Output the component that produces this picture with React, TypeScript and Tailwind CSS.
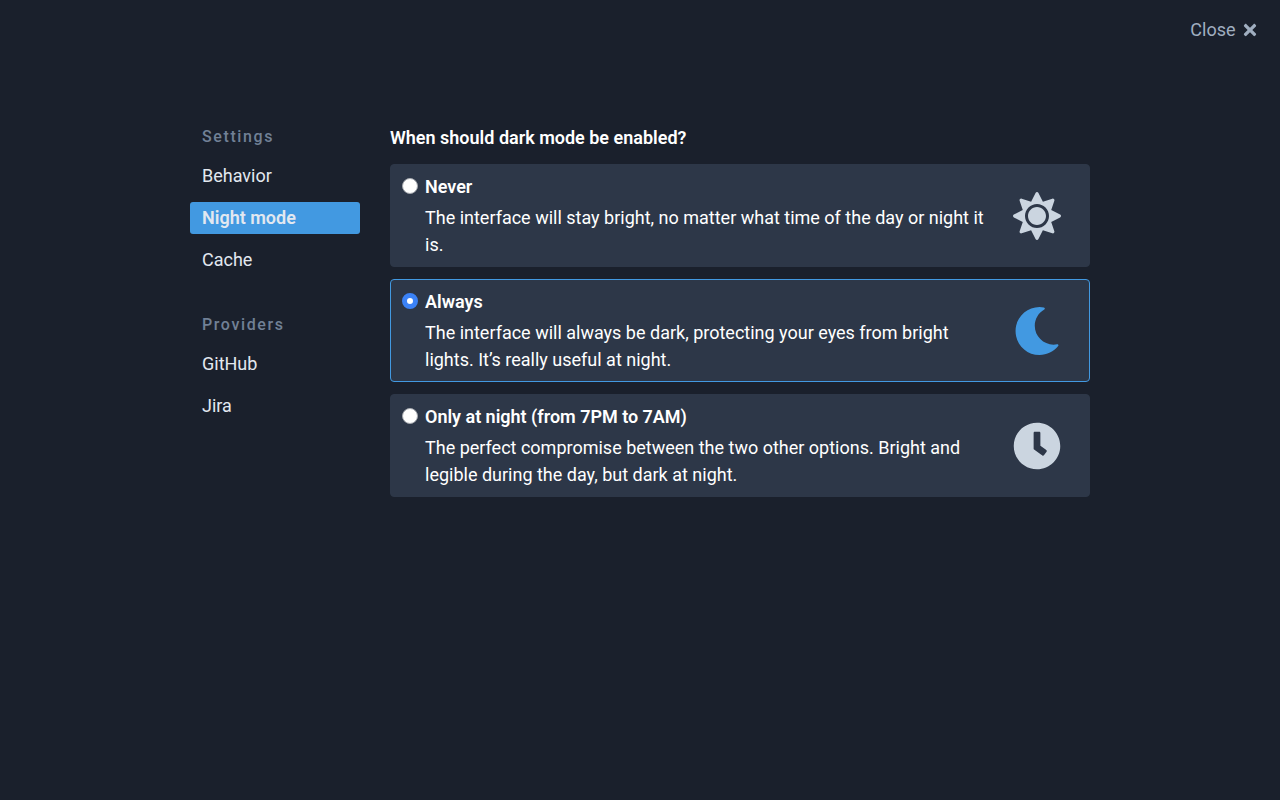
import { FaTimes, FaSun, FaMoon } from "react-icons/fa";

function Clock({ size, className }: { size: number; className?: string }) {
  return (
    <svg viewBox="0 0 512 512" width={size} height={size} fill="currentColor" className={className}>
      <path d="M256 8C119 8 8 119 8 256s111 248 248 248 248-111 248-248S393 8 256 8zm57.1 350.1L224.9 294c-3.1-2.3-4.9-5.9-4.9-9.7V116c0-6.6 5.4-12 12-12h48c6.6 0 12 5.4 12 12v137.7l63.5 46.2c5.4 3.9 6.5 11.4 2.6 16.8l-28.2 38.8c-3.9 5.3-11.4 6.5-16.8 2.6z" />
    </svg>
  );
}

const sections = [
  { title: "Settings", items: ["Behavior", "Night mode", "Cache"] },
  { title: "Providers", items: ["GitHub", "Jira"] },
];

const options = [
  { title: "Never", text: "The interface will stay bright, no matter what time of the day or night it is.", Icon: FaSun },
  { title: "Always", text: "The interface will always be dark, protecting your eyes from bright lights. It’s really useful at night.", Icon: FaMoon },
  { title: "Only at night (from 7PM to 7AM)", text: "The perfect compromise between the two other options. Bright and legible during the day, but dark at night.", Icon: Clock },
];

export default function App() {
  return (
    <div className="min-h-screen bg-[#1a202c] font-['Roboto',sans-serif] text-[18px] leading-[27px] text-white">
      <header className="flex h-[60px] items-center justify-end pr-[21px]">
        <button className="flex items-center gap-[5.5px] text-[#a0aec0]">
          <span className="pb-[2px]">Close</span>
          <FaTimes size={18} />
        </button>
      </header>
      <main className="mx-auto flex w-[900px] gap-[30px] pt-16">
        <nav className="w-[170px] pt-px">
          {sections.map((s) => (
            <section key={s.title} className="mb-[37px]">
              <h2 className="mb-[11px] px-3 text-base leading-6 font-medium tracking-[1.6px] text-[#718096]">{s.title}</h2>
              <ul className="flex flex-col gap-[10px]">
                {s.items.map((i) => (
                  <li key={i} className={i === "Night mode" ? "h-8 rounded-[3px] bg-[#4299e1] px-3 leading-8 font-semibold text-[#e2e8f0]" : "h-8 px-3 leading-8 text-[#e2e8f0]"}>
                    {i}
                  </li>
                ))}
              </ul>
            </section>
          ))}
        </nav>
        <form className="w-[700px]">
          <h1 className="mb-[13px] font-semibold">When should dark mode be enabled?</h1>
          <div className="flex flex-col gap-3">
            {options.map(({ title, text, Icon }) => {
              const on = title === "Always";
              return (
                <label key={title} className={on ? "flex h-[103px] items-center rounded border border-[#4299e1] bg-[#2d3748] pr-7 pl-[11px]" : "flex h-[103px] items-center rounded border border-[#2d3748] bg-[#2d3748] pr-7 pl-[11px]"}>
                  <span className="mr-[7px] flex h-[85px] pt-[5px]">
                    <input
                      type="radio"
                      name="mode"
                      defaultChecked={on}
                      className="h-4 w-4 appearance-none rounded-full border border-[#a5a8ae] bg-white checked:border-[5px] checked:border-[#3b82f7]"
                    />
                  </span>
                  <span className="w-[562px]">
                    <span className="mb-1 block font-semibold tracking-[-0.015px]">{title}</span>
                    <span className="block">{text}</span>
                  </span>
                  <Icon size={48} className={on ? "ml-auto text-[#4299e1]" : "ml-auto text-[#cbd5e0]"} />
                </label>
              );
            })}
          </div>
        </form>
      </main>
    </div>
  );
}
